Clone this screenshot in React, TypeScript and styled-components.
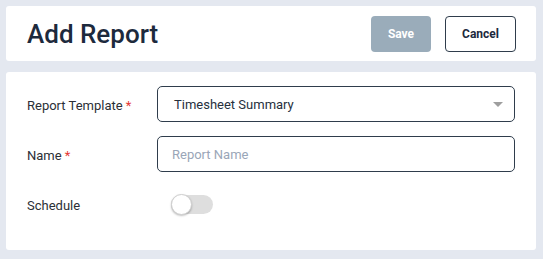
import React from "react";
import styled, { createGlobalStyle } from "styled-components";

const Global = createGlobalStyle`
  html, body { margin: 0; padding: 0; background: #e4e8f0; }
  body { font-family: Roboto, "Liberation Sans", Arial, sans-serif; }
  * { box-sizing: border-box; }
`;

const Page = styled.div`
  display: flex;
  flex-direction: column;
  gap: 11px;
  padding: 6px 7px 9px 6px;
  width: 543px;
  height: 259px;
`;

const Card = styled.div`
  background: #ffffff;
  border-radius: 3px;
`;

const Header = styled(Card)`
  height: 55px;
  display: flex;
  align-items: center;
  justify-content: space-between;
  padding: 0 20px 0 21px;
`;

const Title = styled.h1`
  margin: 0;
  font-size: 26px;
  font-weight: 500;
  color: #1d2a3d;
  letter-spacing: 0;
`;

const Actions = styled.div`
  display: flex;
  gap: 14px;
`;

const Button = styled.button<{ $variant: "primary" | "outline" }>`
  height: 36px;
  padding: 0;
  width: ${(p) => (p.$variant === "primary" ? "60px" : "71px")};
  border-radius: 4px;
  font-family: Roboto, "Liberation Sans", Arial, sans-serif;
  font-size: 12px;
  font-weight: 700;
  cursor: pointer;
  background: ${(p) => (p.$variant === "primary" ? "#9aacba" : "#ffffff")};
  color: ${(p) => (p.$variant === "primary" ? "#ffffff" : "#1d2a3d")};
  border: ${(p) => (p.$variant === "primary" ? "none" : "1px solid #2f3d4c")};
`;

const Form = styled(Card)`
  flex: 1;
  display: grid;
  grid-template-columns: 130px 1fr;
  grid-auto-rows: 36px;
  row-gap: 14px;
  align-items: center;
  padding: 14px 21px 0 21px;
`;

const Label = styled.label`
  font-size: 13px;
  color: #2b2f36;
  padding-top: 2px;
`;

const Req = styled.span`
  color: #e53935;
  margin-left: 3px;
`;

const Field = styled.div<{ $pad: number }>`
  position: relative;
  height: 36px;
  border: 1px solid #2f3d4c;
  border-radius: 5px;
  display: flex;
  align-items: center;
  padding: 0 16px 0 ${(p) => p.$pad}px;
  font-size: 13px;
  color: #26303d;
`;

const Input = styled.input`
  border: none;
  outline: none;
  width: 100%;
  padding: 0;
  font-family: Roboto, "Liberation Sans", Arial, sans-serif;
  font-size: 13px;
  color: #26303d;
  &::placeholder { color: #9aa6b8; }
`;

const Caret = styled.span`
  position: absolute;
  right: 11px;
  top: 15px;
  width: 0;
  height: 0;
  border-left: 5px solid transparent;
  border-right: 5px solid transparent;
  border-top: 5px solid #9e9e9e;
`;

const SwitchWrap = styled.div`
  display: flex;
  align-items: center;
  padding-left: 14px;
`;

const Track = styled.div`
  position: relative;
  width: 42px;
  height: 19px;
  border-radius: 10px;
  background: #dedede;
`;

const Thumb = styled.div`
  position: absolute;
  left: 0;
  top: -1px;
  width: 21px;
  height: 21px;
  border-radius: 50%;
  background: #ffffff;
  border: 1px solid #cfcfcf;
  box-shadow: 0 1px 2px rgba(0, 0, 0, 0.25);
`;

export default function App() {
  return (
    <>
      <Global />
      <Page>
        <Header>
          <Title>Add Report</Title>
          <Actions>
            <Button $variant="primary">Save</Button>
            <Button $variant="outline">Cancel</Button>
          </Actions>
        </Header>
        <Form>
          <Label>
            Report Template<Req>*</Req>
          </Label>
          <Field $pad={16}>
            Timesheet Summary
            <Caret />
          </Field>
          <Label>
            Name<Req>*</Req>
          </Label>
          <Field $pad={14}>
            <Input placeholder="Report Name" />
          </Field>
          <Label>Schedule</Label>
          <SwitchWrap>
            <Track>
              <Thumb />
            </Track>
          </SwitchWrap>
        </Form>
      </Page>
    </>
  );
}
